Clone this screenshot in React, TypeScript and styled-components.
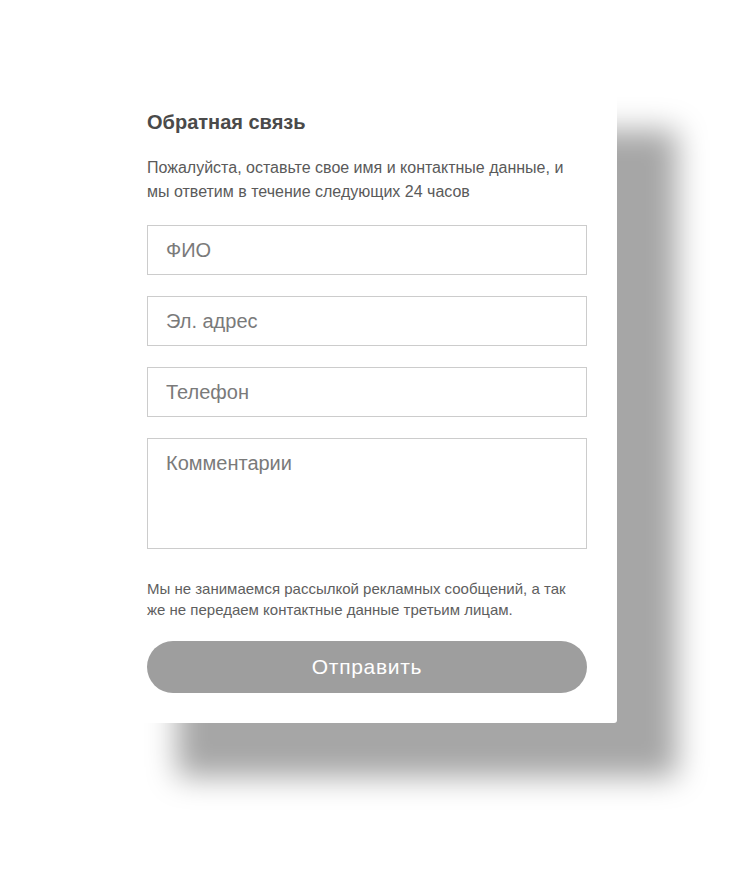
import { createGlobalStyle, styled } from "styled-components";

const GlobalStyle = createGlobalStyle`
    html, body {
        margin: 0;
        padding: 0;
        background: #ffffff;
        font-family: "Liberation Sans", Arial, sans-serif;
    }
`;

const Page = styled.div`
    padding: 76px 0 120px 117px;
`;

const Card = styled.form`
    width: 500px;
    box-sizing: border-box;
    padding: 34px 30px 30px;
    background: #ffffff;
    border-radius: 3px;
    box-shadow: 60px 54px 30px #a6a6a6;
    display: flex;
    flex-direction: column;
`;

const Title = styled.h2`
    margin: 0;
    font-size: 20px;
    line-height: 24px;
    font-weight: 700;
    color: #4a4a4a;
`;

const Lead = styled.p`
    margin: 22px 0 0;
    font-size: 16px;
    line-height: 24px;
    color: #5a5a5a;
`;

const Fields = styled.div`
    display: flex;
    flex-direction: column;
    gap: 21px;
    margin-top: 21px;
`;

const fieldBase = `
    width: 100%;
    box-sizing: border-box;
    border: 1px solid #cccccc;
    border-radius: 0;
    background: #ffffff;
    font-family: "Liberation Sans", Arial, sans-serif;
    font-size: 20px;
    color: #444444;
    padding: 0 18px;
    outline: none;

    &::placeholder {
        color: #7a7a7a;
    }
`;

const Field = styled.input`
    ${fieldBase}
    height: 50px;
`;

const Comment = styled.textarea`
    ${fieldBase}
    height: 111px;
    padding-top: 13px;
    resize: none;
    display: block;
`;

const Notice = styled.p`
    margin: 29px 0 0;
    font-size: 15px;
    line-height: 21px;
    color: #5e5e5e;
`;

const SubmitButton = styled.button`
    margin-top: 21px;
    height: 52px;
    width: 100%;
    border: 0;
    border-radius: 26px;
    background: #9e9e9e;
    color: #ffffff;
    font-family: "Liberation Sans", Arial, sans-serif;
    font-size: 21px;
    letter-spacing: 0.7px;
    cursor: pointer;
`;

export default function App() {
    return (
        <>
            <GlobalStyle />
            <Page>
                <Card onSubmit={(e) => e.preventDefault()}>
                    <Title>Обратная связь</Title>
                    <Lead>
                        Пожалуйста, оставьте свое имя и контактные данные, и мы ответим в течение
                        следующих 24 часов
                    </Lead>
                    <Fields>
                        <Field type="text" placeholder="ФИО" />
                        <Field type="email" placeholder="Эл. адрес" />
                        <Field type="tel" placeholder="Телефон" />
                        <Comment placeholder="Комментарии" />
                    </Fields>
                    <Notice>
                        Мы не занимаемся рассылкой рекламных сообщений, а так же не передаем
                        контактные данные третьим лицам.
                    </Notice>
                    <SubmitButton type="submit">Отправить</SubmitButton>
                </Card>
            </Page>
        </>
    );
}
